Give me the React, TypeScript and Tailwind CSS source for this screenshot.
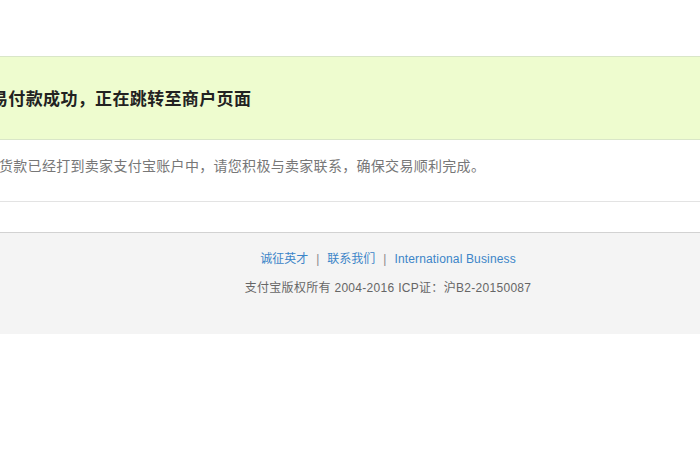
import React from 'react';

const cjk = { fontFamily: '"Noto Sans CJK SC", "Liberation Sans", sans-serif' };

const App = () => {
  return (
    <div className="min-h-screen w-full bg-white overflow-hidden" style={cjk}>
      {/* TOP SPACE */}
      <div className="h-[56px]" />

      {/* SUCCESS BAND */}
      <div className="h-[84px] bg-[#eefccf] border-y border-[#d9e6c8] flex items-center">
        <h1 className="ml-[-9px] text-[17px] tracking-[0.35px] font-bold text-[#222] leading-6 whitespace-nowrap">
          易付款成功，正在跳转至商户页面
        </h1>
      </div>

      {/* MESSAGE */}
      <div className="h-[62px] border-b border-[#e3e3e3] pt-[15px]">
        <p className="ml-[-1px] text-[14px] tracking-[0.3px] text-[#777] leading-5 whitespace-nowrap">
          货款已经打到卖家支付宝账户中，请您积极与卖家联系，确保交易顺利完成。
        </p>
      </div>

      <div className="h-[30px]" />

      {/* FOOTER */}
      <div
        className="h-[102px] bg-[#f4f4f4] border-t border-[#d2d2d2] pt-[16px] pl-[76px] flex flex-col items-center text-[12px] leading-5"
        style={{ fontFamily: '"Liberation Sans", "Noto Sans CJK SC", sans-serif' }}
      >
        <div className="flex items-center text-[#3c85c8]">
          <span>诚征英才</span>
          <span className="mx-[8px] text-[#888]">|</span>
          <span>联系我们</span>
          <span className="mx-[8px] text-[#888]">|</span>
          <span className="tracking-[0.15px]">International Business</span>
        </div>
        <div className="mt-[9px] text-[#666] tracking-[0.3px]">
          支付宝版权所有 2004-2016 ICP证：沪B2-20150087
        </div>
      </div>
    </div>
  );
};

export default App;
